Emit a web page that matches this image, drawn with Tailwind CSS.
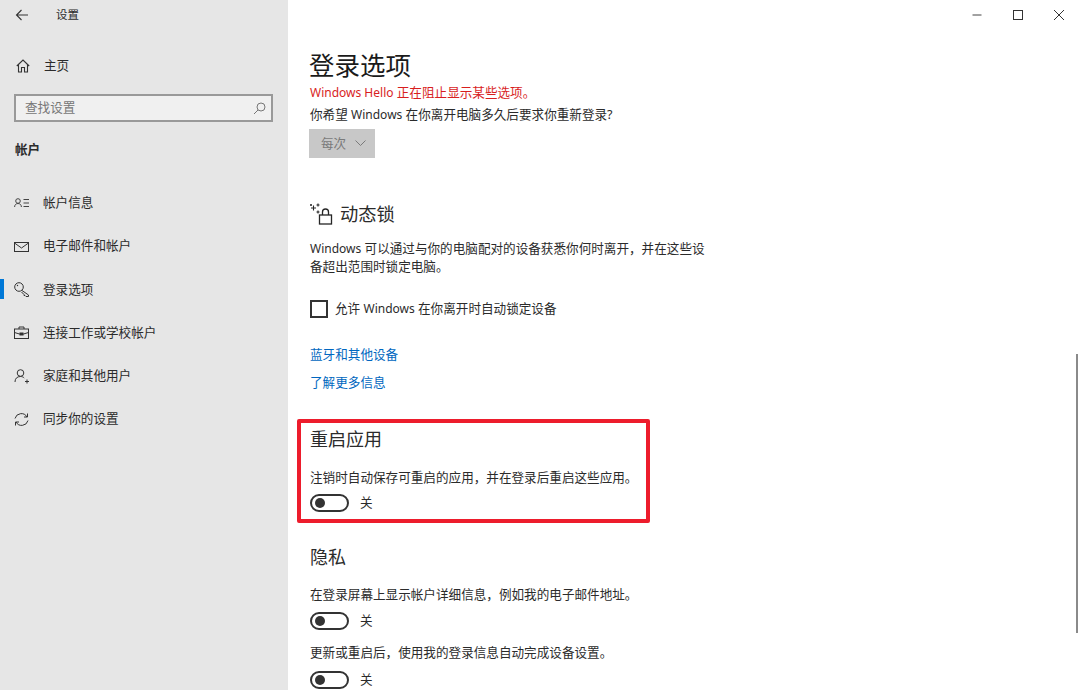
<!DOCTYPE html>
<html>
<head>
    <title>设置</title>
    <script src="https://cdn.jsdelivr.net/npm/@tailwindcss/browser@4"></script>
</head>
<body class="overflow-hidden bg-white">
    <div class="relative flex h-[690px] w-[1080px] overflow-hidden font-['Noto_Sans','Noto_Sans_CJK_SC',sans-serif] text-[12.6px] text-[#2b2b2b]">
        <!-- Sidebar -->
        <aside class="flex h-full w-[288px] shrink-0 flex-col bg-[#e6e6e6]">
            <div class="flex h-[30px] items-center pl-[15px]">
                <svg class="h-[14px] w-[14px]" viewBox="0 0 14 14" fill="none" stroke="#333" stroke-width="1.1"><path d="M13 7H1.5M6.5 2 1.5 7l5 5"/></svg>
                <span class="ml-[27px] text-[11.5px]">设置</span>
            </div>
            <div class="mt-[21px] flex h-[30px] items-center pl-[16px]">
                <svg class="h-[14px] w-[14px]" viewBox="0 0 14 14" fill="none" stroke="#333" stroke-width="1.1"><path d="M.8 7 7 1l6.200 6M2.500 5.500V13H5.500V8.500H8.500V13H11.500V5.500"/></svg>
                <span class="ml-[14px]">主页</span>
            </div>
            <div class="ml-[14px] mt-[13px] flex h-[28px] w-[259px] items-center justify-between border-2 border-[#999] bg-[#f0f0f0] pl-[9px] pr-[5px] text-[#777]">
                <span>查找设置</span>
                <svg class="h-[13px] w-[13px]" viewBox="0 0 13 13" fill="none" stroke="#777" stroke-width="1"><circle cx="8" cy="5" r="4"/><path d="M5 8 1 12"/></svg>
            </div>
            <div class="ml-[15px] mt-[19px] font-bold leading-[18px]">帐户</div>
            <nav class="mt-[23px] flex flex-col">
                <a class="flex h-[43.200px] items-center pl-[14px]">
                    <svg class="h-[14px] w-[15px]" viewBox="0 0 15 14" fill="none" stroke="#444" stroke-width="1"><circle cx="4" cy="4" r="2.300"/><path d="M.6 10c0-2 1.300-3.500 3.400-3.500S7.400 8 7.400 10M9.500 2.500H15M9.500 6H15M9.500 9.500H15"/></svg>
                    <span class="ml-[14px]">帐户信息</span>
                </a>
                <a class="flex h-[43.200px] items-center pl-[14px]">
                    <svg class="h-[14px] w-[15px]" viewBox="0 0 15 14" fill="none" stroke="#333" stroke-width="1"><rect x=".5" y="2.500" width="14" height="9"/><path d="M.5 3 7.500 8l7-5"/></svg>
                    <span class="ml-[14px]">电子邮件和帐户</span>
                </a>
                <a class="relative flex h-[43.200px] items-center pl-[14px]">
                    <span class="absolute left-0 top-[11px] h-[20px] w-[4px] bg-[#0078d7]"></span>
                    <svg class="h-[15px] w-[15px]" viewBox="0 0 15 15" fill="none" stroke="#333" stroke-width="1"><circle cx="5" cy="5" r="4.300"/><circle cx="3.500" cy="3.500" r=".7" fill="#333" stroke="none"/><path d="M8 8.500l6.500 4.500v1.500h-2.500L11 13.500H10V12.500L7.500 10"/></svg>
                    <span class="ml-[14px]">登录选项</span>
                </a>
                <a class="flex h-[43.200px] items-center pl-[14px]">
                    <svg class="h-[14px] w-[15px]" viewBox="0 0 15 14" fill="none" stroke="#333" stroke-width="1"><rect x=".5" y="3" width="14" height="9.500"/><path d="M5 3V1h5v2M.5 6.500l5 1.500h4l5-1.500"/><rect x="6" y="7" width="3" height="2" fill="#333"/></svg>
                    <span class="ml-[14px]">连接工作或学校帐户</span>
                </a>
                <a class="flex h-[43.200px] items-center pl-[14px]">
                    <svg class="h-[15px] w-[15px]" viewBox="0 0 15 15" fill="none" stroke="#333" stroke-width="1"><circle cx="6.500" cy="4" r="3.300"/><path d="M1 13c0-3.500 2-5.500 5.500-5.500 1.500 0 2.800.5 3.700 1.500M11 12.500h4M13 10.500v4"/></svg>
                    <span class="ml-[14px]">家庭和其他用户</span>
                </a>
                <a class="flex h-[43.200px] items-center pl-[14px]">
                    <svg class="h-[15px] w-[15px]" viewBox="0 0 15 15" fill="none" stroke="#333" stroke-width="1"><path d="M1 6.500A6.500 6.500 0 0 1 13 5M14 8.500A6.500 6.500 0 0 1 2 10M13.500 1.500V5H10M1.500 13.500V10H5"/></svg>
                    <span class="ml-[14px]">同步你的设置</span>
                </a>
            </nav>
        </aside>

        <!-- Main content -->
        <main class="flex-1 pl-[22px]">
            <h1 class="-ml-[1px] mt-[46px] text-[25.500px] leading-[38px] text-[#1a1a1a]">登录选项</h1>
            <p class="leading-[18px] text-[#d81e1e]"><span class="text-[12px]">Windows Hello</span> 正在阻止显示某些选项。</p>
            <p class="mt-[4px] leading-[18px]">你希望 <span class="text-[12px]">Windows</span> 在你离开电脑多久后要求你重新登录?</p>
            <div class="-ml-[1px] mt-[5px] flex h-[29px] w-[66px] items-center justify-between bg-[#c8c8c8] pl-[12px] pr-[9px] text-[#7a7a7a]">
                <span class="pt-[1px]">每次</span>
                <svg class="h-[7px] w-[11px]" viewBox="0 0 11 7" fill="none" stroke="#7a7a7a" stroke-width="1"><path d="M.5.5l5 5 5-5"/></svg>
            </div>

            <div class="mt-[41px] flex h-[30px] items-center">
                <svg class="h-[24px] w-[24px]" viewBox="0 0 24 24" fill="none" stroke="#262626" stroke-width="1.300"><rect x="9.500" y="13" width="12" height="9"/><path d="M12.500 13V10a3 3 0 0 1 6 0v3"/><path d="M3.500 3.500v5M1 6h5M8 1.500v3M6.500 3h3M1 2v2M0 3h2M8 8.500v3M6.500 10h3" stroke-width="1.100"/></svg>
                <span class="ml-[6px] text-[18.300px]">动态锁</span>
            </div>
            <p class="mt-[11px] w-[400px] leading-[18px]"><span class="text-[12px]">Windows</span> 可以通过与你的电脑配对的设备获悉你何时离开，并在这些设备超出范围时锁定电脑。</p>
            <label class="mt-[23px] flex h-[20px] items-center">
                <span class="h-[18px] w-[18px] border-2 border-[#333]"></span>
                <span class="ml-[7px]">允许 <span class="text-[12px]">Windows</span> 在你离开时自动锁定设备</span>
            </label>
            <a class="mt-[27px] block leading-[18px] text-[#0067c0]">蓝牙和其他设备</a>
            <a class="mt-[10px] block leading-[18px] text-[#0067c0]">了解更多信息</a>

            <h2 class="mt-[33px] text-[18px] leading-[28px]">重启应用</h2>
            <p class="mt-[16px] leading-[18px]">注销时自动保存可重启的应用，并在登录后重启这些应用。</p>
            <div class="mt-[6px] flex h-[20px] items-center">
                <span class="flex h-[18px] w-[39px] items-center rounded-full border-2 border-[#333] pl-[3px]"><span class="h-[10px] w-[10px] rounded-full bg-[#333]"></span></span>
                <span class="ml-[11px]">关</span>
            </div>

            <h2 class="mt-[30px] text-[18px] leading-[28px]">隐私</h2>
            <p class="mt-[15px] leading-[18px]">在登录屏幕上显示帐户详细信息，例如我的电子邮件地址。</p>
            <div class="mt-[7px] flex h-[20px] items-center">
                <span class="flex h-[18px] w-[39px] items-center rounded-full border-2 border-[#333] pl-[3px]"><span class="h-[10px] w-[10px] rounded-full bg-[#333]"></span></span>
                <span class="ml-[11px]">关</span>
            </div>
            <p class="mt-[13px] leading-[18px]">更新或重启后，使用我的登录信息自动完成设备设置。</p>
            <div class="mt-[8px] flex h-[20px] items-center">
                <span class="flex h-[18px] w-[39px] items-center rounded-full border-2 border-[#333] pl-[3px]"><span class="h-[10px] w-[10px] rounded-full bg-[#333]"></span></span>
                <span class="ml-[11px]">关</span>
            </div>
        </main>

        <!-- Window buttons -->
        <div class="absolute right-[1px] top-0 flex h-[30px] items-center">
            <span class="flex w-[41px] justify-center"><svg class="h-[12px] w-[12px]" viewBox="0 0 12 12" stroke="#444" stroke-width="1"><path d="M1.500 6h9"/></svg></span>
            <span class="flex w-[41px] justify-center"><svg class="h-[12px] w-[12px]" viewBox="0 0 12 12" fill="none" stroke="#333" stroke-width="1"><rect x="1.500" y="1.500" width="9" height="9"/></svg></span>
            <span class="flex w-[41px] justify-center"><svg class="h-[12px] w-[12px]" viewBox="0 0 12 12" stroke="#333" stroke-width="1"><path d="M1 1l10 10M11 1 1 11"/></svg></span>
        </div>

        <!-- Scrollbar thumb -->
        <div class="absolute left-[1076px] top-[354px] h-[279px] w-[2px] bg-[#8a8a8a]"></div>

        <!-- Red annotation box -->
        <div class="absolute left-[297px] top-[419px] h-[104px] w-[353px] rounded-[2px] border-[4px] border-[#ed1c2c]"></div>
    </div>
</body>
</html>
